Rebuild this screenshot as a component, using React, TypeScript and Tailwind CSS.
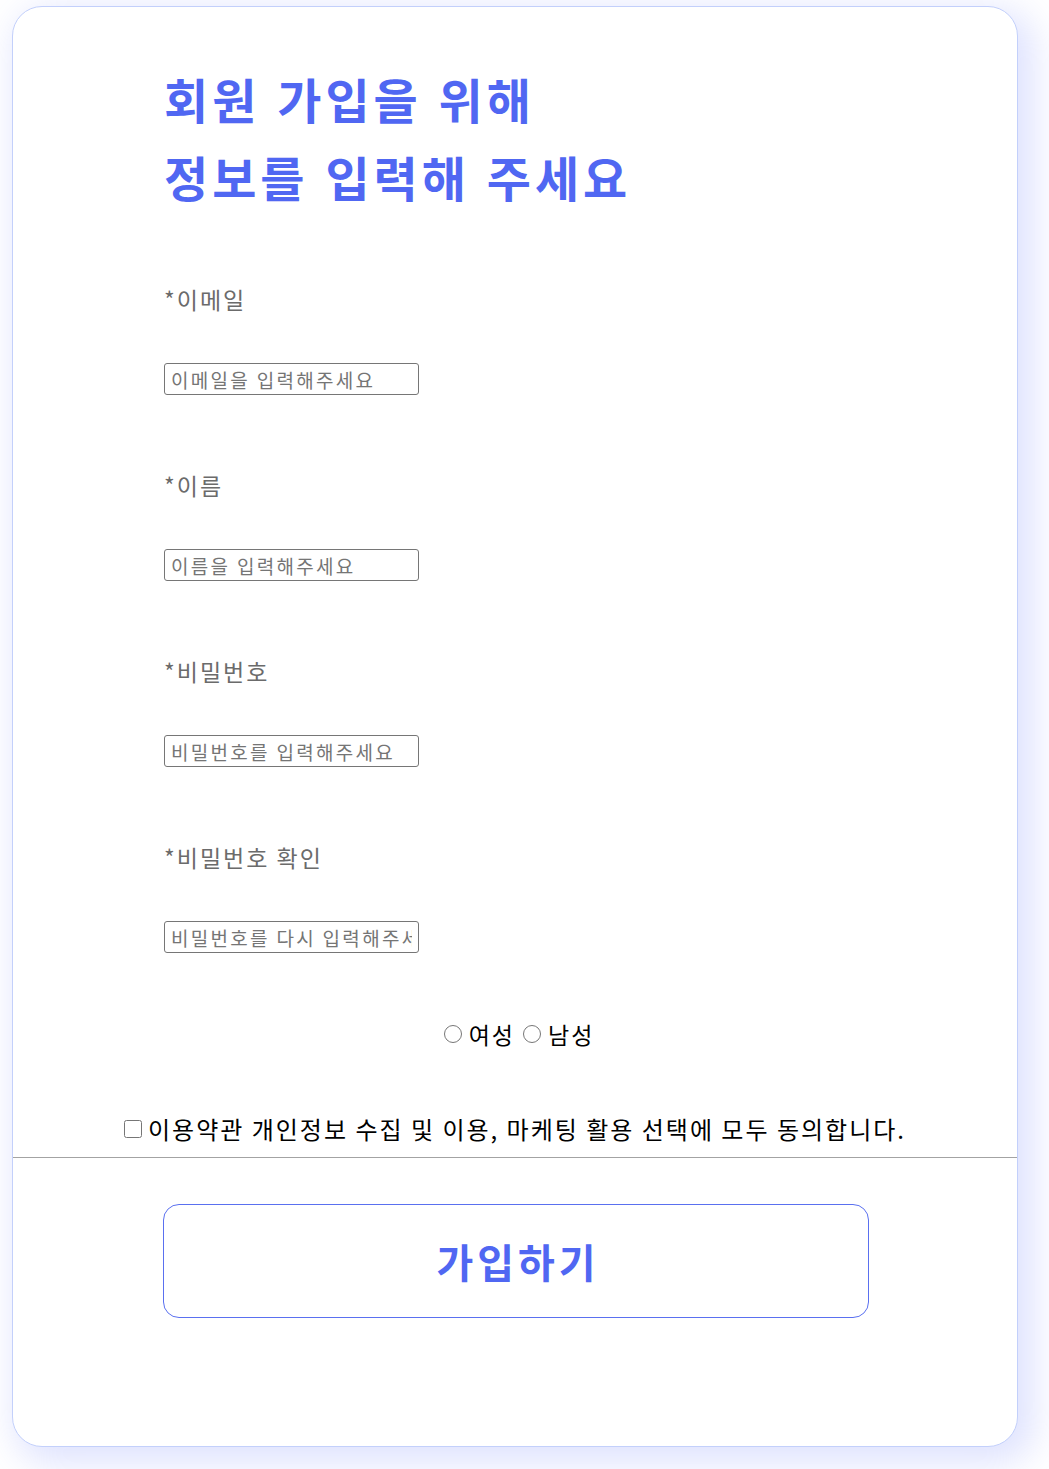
import { useState } from 'react'

const font = { fontFamily: '"Noto Sans CJK KR", "Noto Sans", sans-serif' }

const fields = [
  { label: '*이메일', placeholder: '이메일을 입력해주세요', type: 'email' },
  { label: '*이름', placeholder: '이름을 입력해주세요', type: 'text' },
  { label: '*비밀번호', placeholder: '비밀번호를 입력해주세요', type: 'password' },
  { label: '*비밀번호 확인', placeholder: '비밀번호를 다시 입력해주세요', type: 'password' },
]

export default function App() {
  const [gender, setGender] = useState('')
  const [agree, setAgree] = useState(false)

  return (
    <div className="min-h-[1469px] bg-white pl-[12px] pr-[31px] pt-[6px] pb-[22px] font-['Noto_Sans_CJK_KR',sans-serif]">
      <div className="flex flex-col rounded-[30px] border border-[#c3d0fb] bg-white pt-[52px] pb-[128px] shadow-[10px_10px_36px_6px_rgba(92,112,250,0.2)]">
        {/* Heading */}
        <h1 className="pl-[151px] text-[48px] font-bold leading-[78px] tracking-[4px] [word-spacing:2px] text-[#5067f2]">
          회원 가입을 위해
          <br />
          정보를 입력해 주세요
        </h1>

        {/* Fields */}
        <div className="mt-[69px] flex flex-col gap-[75px] pl-[151px]">
          {fields.map((f) => (
            <label key={f.label} className="flex flex-col items-start gap-[49px]">
              <span className="text-[23px] leading-[30px] tracking-[2px] text-[#6b6b6b]">{f.label}</span>
              <input
                type={f.type === 'password' ? 'text' : f.type}
                placeholder={f.placeholder}
                className="h-[32px] w-[255px] rounded-[3px] border border-[#767676] px-[6px] text-[19px] tracking-[2.3px] placeholder:text-[#757575]"
                style={font}
              />
            </label>
          ))}
        </div>

        {/* Gender */}
        <div className="mt-[66px] flex h-[30px] items-center justify-center gap-[8px] pl-[8px] text-[23px] leading-[30px] tracking-[2px] text-black">
          <label className="flex items-center gap-[7px]">
            <input
              type="radio"
              name="gender"
              checked={gender === 'f'}
              onChange={() => setGender('f')}
              className="m-0 h-[18px] w-[18px]"
            />
            여성
          </label>
          <label className="flex items-center gap-[7px]">
            <input
              type="radio"
              name="gender"
              checked={gender === 'm'}
              onChange={() => setGender('m')}
              className="m-0 h-[18px] w-[18px]"
            />
            남성
          </label>
        </div>

        {/* Agreement */}
        <label className="mt-[65px] flex h-[30px] items-center justify-center gap-[6px] text-[24px] leading-[30px] tracking-[2px] text-black">
          <input
            type="checkbox"
            checked={agree}
            onChange={(e) => setAgree(e.target.checked)}
            className="m-0 h-[18px] w-[18px]"
          />
          이용약관 개인정보 수집 및 이용, 마케팅 활용 선택에 모두 동의합니다.
        </label>

        <hr className="mt-[13px] border-t border-[#a3a3a3]" />

        {/* Submit */}
        <div className="mt-[46px] pl-[150px] pr-[148px]">
          <button
            type="button"
            className="flex h-[114px] w-full items-center justify-center rounded-[16px] border border-[#5a70f0] bg-white pl-[4px] text-[40px] font-bold tracking-[4px] text-[#5067f2]"
          >
            가입하기
          </button>
        </div>
      </div>
    </div>
  )
}
